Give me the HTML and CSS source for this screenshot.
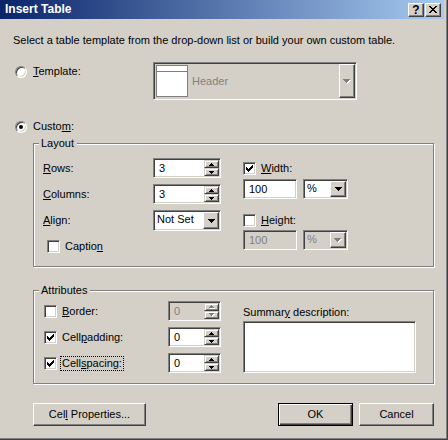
FILE: index.html
```html
<!DOCTYPE html>
<html>
<head>
<meta charset="utf-8">
<title>Insert Table</title>
<link rel="stylesheet" href="styles.css">
</head>
<body>
<div class="window">
  <div class="titlebar">
    <span class="title">Insert Table</span>
    <div class="caption-btns">
      <span class="cbtn help">?</span>
      <span class="cbtn close"><svg width="8" height="7" viewBox="0 0 8 7"><path d="M0 0h2v1H0zM6 0h2v1H6zM1 1h2v1H1zM5 1h2v1H5zM2 2h4v1H2zM3 3h2v1H3zM2 4h4v1H2zM1 5h2v1H1zM5 5h2v1H5zM0 6h2v1H0zM6 6h2v1H6z" fill="#000"/></svg></span>
    </div>
  </div>

  <p class="intro">Select a table template from the drop-down list or build your own custom table.</p>

  <div class="template-row">
    <div class="option"><span class="radio"></span><span><u>T</u>emplate:</span></div>
    <div class="tcombo sunken disabled">
      <svg class="ticon" width="32" height="32" viewBox="0 0 32 32"><rect x="0.5" y="0.5" width="31" height="31" fill="#fff" stroke="#808080"/><path d="M0 6.5H32" stroke="#808080"/></svg>
      <span class="tlabel">Header</span>
      <span class="ddbtn"><svg width="8" height="5" viewBox="0 0 8 5"><path d="M1 1h7v1H7v1H6v1H5v1H4V4H3V3H2V2H1z" fill="#fff"/><path d="M0 0h7v1H6v1H5v1H4v1H3V3H2V2H1V1H0z" fill="#808080"/></svg></span>
    </div>
  </div>

  <div class="option custom"><span class="radio checked"></span><span>Custo<u>m</u>:</span></div>

  <div class="group layout">
    <span class="legend">Layout</span>
    <div class="layout-body">
      <div class="lcol">
        <div class="frow">
          <span class="lbl"><u>R</u>ows:</span>
          <div class="spin sunken">
            <span class="val">3</span>
            <span class="sbtns">
              <span class="sbtn"><svg width="5" height="3" viewBox="0 0 5 3"><path d="M2 0h1v1h1v1h1v1H0V2h1V1h1z"/></svg></span>
              <span class="sbtn"><svg width="5" height="3" viewBox="0 0 5 3"><path d="M0 0h5v1H4v1H3v1H2V2H1V1H0z"/></svg></span>
            </span>
          </div>
        </div>
        <div class="frow">
          <span class="lbl"><u>C</u>olumns:</span>
          <div class="spin sunken">
            <span class="val">3</span>
            <span class="sbtns">
              <span class="sbtn"><svg width="5" height="3" viewBox="0 0 5 3"><path d="M2 0h1v1h1v1h1v1H0V2h1V1h1z"/></svg></span>
              <span class="sbtn"><svg width="5" height="3" viewBox="0 0 5 3"><path d="M0 0h5v1H4v1H3v1H2V2H1V1H0z"/></svg></span>
            </span>
          </div>
        </div>
        <div class="frow tall">
          <span class="lbl"><u>A</u>lign:</span>
          <div class="combo sunken align-combo">
            <span class="val">Not Set</span>
            <span class="ddbtn"><svg width="7" height="4" viewBox="0 0 7 4"><path d="M0 0h7v1H6v1H5v1H4v1H3V3H2V2H1V1H0z"/></svg></span>
          </div>
        </div>
        <div class="check caption"><span class="cbox sunken"></span><span>Captio<u>n</u></span></div>
      </div>
      <div class="rcol">
        <div class="check wcheck"><span class="cbox sunken"><svg width="9" height="9" viewBox="0 0 9 9"><path d="M1 3H2V4H3V5H4V4H5V3H6V2H7V1H8V4H7V5H6V6H5V7H4V8H3V7H2V6H1Z"/></svg></span><span><u>W</u>idth:</span></div>
        <div class="pair wpair">
          <div class="edit sunken">100</div>
          <div class="combo sunken unit-combo">
            <span class="val">%</span>
            <span class="ddbtn"><svg width="7" height="4" viewBox="0 0 7 4"><path d="M0 0h7v1H6v1H5v1H4v1H3V3H2V2H1V1H0z"/></svg></span>
          </div>
        </div>
        <div class="check hcheck"><span class="cbox sunken"></span><span><u>H</u>eight:</span></div>
        <div class="pair hpair disabled">
          <div class="edit sunken">100</div>
          <div class="combo sunken unit-combo">
            <span class="val">%</span>
            <span class="ddbtn"><svg width="8" height="5" viewBox="0 0 8 5"><path d="M1 1h7v1H7v1H6v1H5v1H4V4H3V3H2V2H1z" fill="#fff"/><path d="M0 0h7v1H6v1H5v1H4v1H3V3H2V2H1V1H0z" fill="#808080"/></svg></span>
          </div>
        </div>
      </div>
    </div>
  </div>

  <div class="group attrs">
    <span class="legend">Attributes</span>
    <div class="attr-body">
      <div class="acol">
        <div class="arow">
          <div class="check"><span class="cbox sunken"></span><span><u>B</u>order:</span></div>
          <div class="spin sunken small disabled">
            <span class="val">0</span>
            <span class="sbtns">
              <span class="sbtn"><svg width="6" height="4" viewBox="0 0 6 4"><path d="M3 1h1v1h1v1h1v1H1V3h1V2h1z" fill="#fff"/><path d="M2 0h1v1h1v1h1v1H0V2h1V1h1z" fill="#808080"/></svg></span>
              <span class="sbtn"><svg width="6" height="4" viewBox="0 0 6 4"><path d="M1 1h5v1H5v1H4v1H3V3H2V2H1z" fill="#fff"/><path d="M0 0h5v1H4v1H3v1H2V2H1V1H0z" fill="#808080"/></svg></span>
            </span>
          </div>
        </div>
        <div class="arow">
          <div class="check"><span class="cbox sunken"><svg width="9" height="9" viewBox="0 0 9 9"><path d="M1 3H2V4H3V5H4V4H5V3H6V2H7V1H8V4H7V5H6V6H5V7H4V8H3V7H2V6H1Z"/></svg></span><span>Cell<u>p</u>adding:</span></div>
          <div class="spin sunken small">
            <span class="val">0</span>
            <span class="sbtns">
              <span class="sbtn"><svg width="5" height="3" viewBox="0 0 5 3"><path d="M2 0h1v1h1v1h1v1H0V2h1V1h1z"/></svg></span>
              <span class="sbtn"><svg width="5" height="3" viewBox="0 0 5 3"><path d="M0 0h5v1H4v1H3v1H2V2H1V1H0z"/></svg></span>
            </span>
          </div>
        </div>
        <div class="arow">
          <div class="check"><span class="cbox sunken"><svg width="9" height="9" viewBox="0 0 9 9"><path d="M1 3H2V4H3V5H4V4H5V3H6V2H7V1H8V4H7V5H6V6H5V7H4V8H3V7H2V6H1Z"/></svg></span><span class="focus">Cell<u>s</u>pacing:</span></div>
          <div class="spin sunken small">
            <span class="val">0</span>
            <span class="sbtns">
              <span class="sbtn"><svg width="5" height="3" viewBox="0 0 5 3"><path d="M2 0h1v1h1v1h1v1H0V2h1V1h1z"/></svg></span>
              <span class="sbtn"><svg width="5" height="3" viewBox="0 0 5 3"><path d="M0 0h5v1H4v1H3v1H2V2H1V1H0z"/></svg></span>
            </span>
          </div>
        </div>
      </div>
      <div class="scol">
        <span class="slabel">Summar<u>y</u> description:</span>
        <div class="textarea sunken"></div>
      </div>
    </div>
  </div>

  <div class="buttons">
    <span class="btn cellprops"><span>Cel<u>l</u> Properties...</span></span>
    <span class="btn ok"><span>OK</span></span>
    <span class="btn cancel"><span>Cancel</span></span>
  </div>
</div>
</body>
</html>
```

FILE: styles.css
```css
* { box-sizing: border-box; }
html, body { margin: 0; padding: 0; }
body {
  font-family: "Liberation Sans", Arial, sans-serif;
  font-size: 11px;
  line-height: 13px;
  color: #000;
  background: #D4D0C8;
}
u { text-decoration: underline; text-underline-offset: 1px; }

.window {
  width: 448px;
  height: 440px;
  background: #D4D0C8;
  box-shadow: inset -1px -1px #404040, inset -2px -2px #808080;
  overflow: hidden;
}

.titlebar {
  width: 444px;
  height: 19px;
  display: flex;
  align-items: center;
  padding: 0 3px 0 5px;
  background: linear-gradient(to right, #0A246A, #A6CAF0);
}
.title { color: #fff; font-weight: bold; font-size: 12px; }
.caption-btns { margin-left: auto; display: flex; gap: 1px; }
.cbtn {
  width: 16px;
  height: 14px;
  display: flex;
  align-items: center;
  justify-content: center;
  background: #D4D0C8;
  border: 1px solid;
  border-color: #fff #404040 #404040 #fff;
  box-shadow: inset -1px -1px #808080;
}
.cbtn.help { font-weight: bold; font-size: 12px; line-height: 12px; padding-top: 1px; }

.intro { margin: 15px 0 0 13px; height: 13px; }

.option { display: flex; align-items: center; gap: 6px; height: 13px; padding-left: 15px; }
.template-row { display: flex; align-items: flex-start; margin-top: 15px; height: 38px; }
.template-row .option { width: 153px; margin-top: 3px; }
.option.custom { margin-top: 20px; }

.radio {
  width: 12px;
  height: 12px;
  border-radius: 50%;
  border: 1px solid;
  border-color: #808080 #fff #fff #808080;
  box-shadow: inset 1px 1px #404040, inset -1px -1px #D4D0C8;
  background: #fff;
  display: flex;
  align-items: center;
  justify-content: center;
}
.radio.checked::after {
  content: "";
  width: 4px;
  height: 4px;
  border-radius: 50%;
  background: #000;
}

.sunken {
  border: 1px solid;
  border-color: #808080 #fff #fff #808080;
  box-shadow: inset 1px 1px #404040, inset -1px -1px #D4D0C8;
  padding: 1px;
  background: #fff;
}
.disabled .sunken, .sunken.disabled { background: #D4D0C8; color: #808080; }
.tcombo.disabled { background: #D4D0C8; }

.tcombo { width: 204px; height: 38px; display: flex; align-items: center; }
.ticon { margin: 1px 0 0 1px; align-self: flex-start; }
.tlabel { color: #808080; margin-left: 4px; flex: 1; }
.tcombo .ddbtn { align-self: stretch; }

.ddbtn {
  width: 16px;
  display: flex;
  align-items: center;
  justify-content: center;
  background: #D4D0C8;
  border: 1px solid;
  border-color: #fff #404040 #404040 #fff;
  box-shadow: inset -1px -1px #808080;
}
.ddbtn svg { display: block; }

.group {
  margin-left: 33px;
  width: 401px;
  border: 1px solid #808080;
  box-shadow: inset 1px 1px #fff, 1px 1px #fff;
}
.legend {
  display: block;
  width: fit-content;
  margin: -7px 0 0 5px;
  padding: 0 3px 0 2px;
  height: 13px;
  background: #D4D0C8;
}
.group.layout { margin-top: 10px; }
.group.attrs { margin-top: 23px; }

.layout-body { display: flex; padding: 8px 0 13px 9px; }
.lcol { width: 200px; display: flex; flex-direction: column; gap: 6px; }
.frow { display: flex; align-items: center; height: 20px; }
.frow.tall { height: 21px; }
.lbl { width: 110px; }

.spin { width: 68px; height: 20px; display: flex; }
.spin.small { width: 53px; }
.spin .val { flex: 1; padding-left: 4px; line-height: 16px; }
.sbtns { width: 15px; display: flex; flex-direction: column; }
.sbtn {
  height: 8px;
  display: flex;
  align-items: center;
  justify-content: center;
  background: #D4D0C8;
  border: 1px solid;
  border-color: #D4D0C8 #404040 #404040 #D4D0C8;
  box-shadow: inset 1px 1px #fff, inset -1px -1px #808080;
}
.sbtn svg { display: block; }

.combo { display: flex; }
.combo .val { flex: 1; padding-left: 2px; line-height: 15px; }
.align-combo { width: 68px; height: 21px; }
.unit-combo { width: 45px; height: 20px; }

.check { display: flex; align-items: center; gap: 5px; height: 13px; }
.cbox { width: 13px; height: 13px; display: block; flex: none; }
.cbox svg { display: block; }
.check.caption { margin: 3px 0 0 4px; }

.rcol { display: flex; flex-direction: column; }
.wcheck { margin-top: 4px; }
.pair { display: flex; gap: 6px; }
.wpair { margin-top: 4px; }
.hcheck { margin-top: 15px; }
.hpair { margin-top: 3px; }
.edit { width: 54px; height: 20px; padding-left: 5px; line-height: 16px; }

.attr-body { display: flex; padding: 4px 0 10px 10px; }
.acol { width: 199px; display: flex; flex-direction: column; gap: 6px; }
.arow { display: flex; align-items: center; height: 20px; }
.arow .check { width: 124px; }
.focus { outline: 1px dotted #000; outline-offset: 0; padding: 0 1px; margin-left: -1px; }
.scol { display: flex; flex-direction: column; }
.slabel { margin-top: 5px; }
.textarea { width: 173px; height: 52px; margin-top: 2px; }

.buttons { display: flex; margin: 19px 0 0 33px; width: 401px; }
.btn {
  height: 23px;
  display: flex;
  align-items: center;
  justify-content: center;
  background: #D4D0C8;
  border: 1px solid;
  border-color: #fff #404040 #404040 #fff;
  box-shadow: inset -1px -1px #808080;
}
.btn.cellprops { width: 113px; }
.btn.ok {
  width: 75px;
  margin-left: auto;
  border: 1px solid #000;
  box-shadow: inset 1px 1px #fff, inset -1px -1px #404040, inset -2px -2px #808080;
}
.btn.cancel { width: 75px; margin-left: 6px; }
```
